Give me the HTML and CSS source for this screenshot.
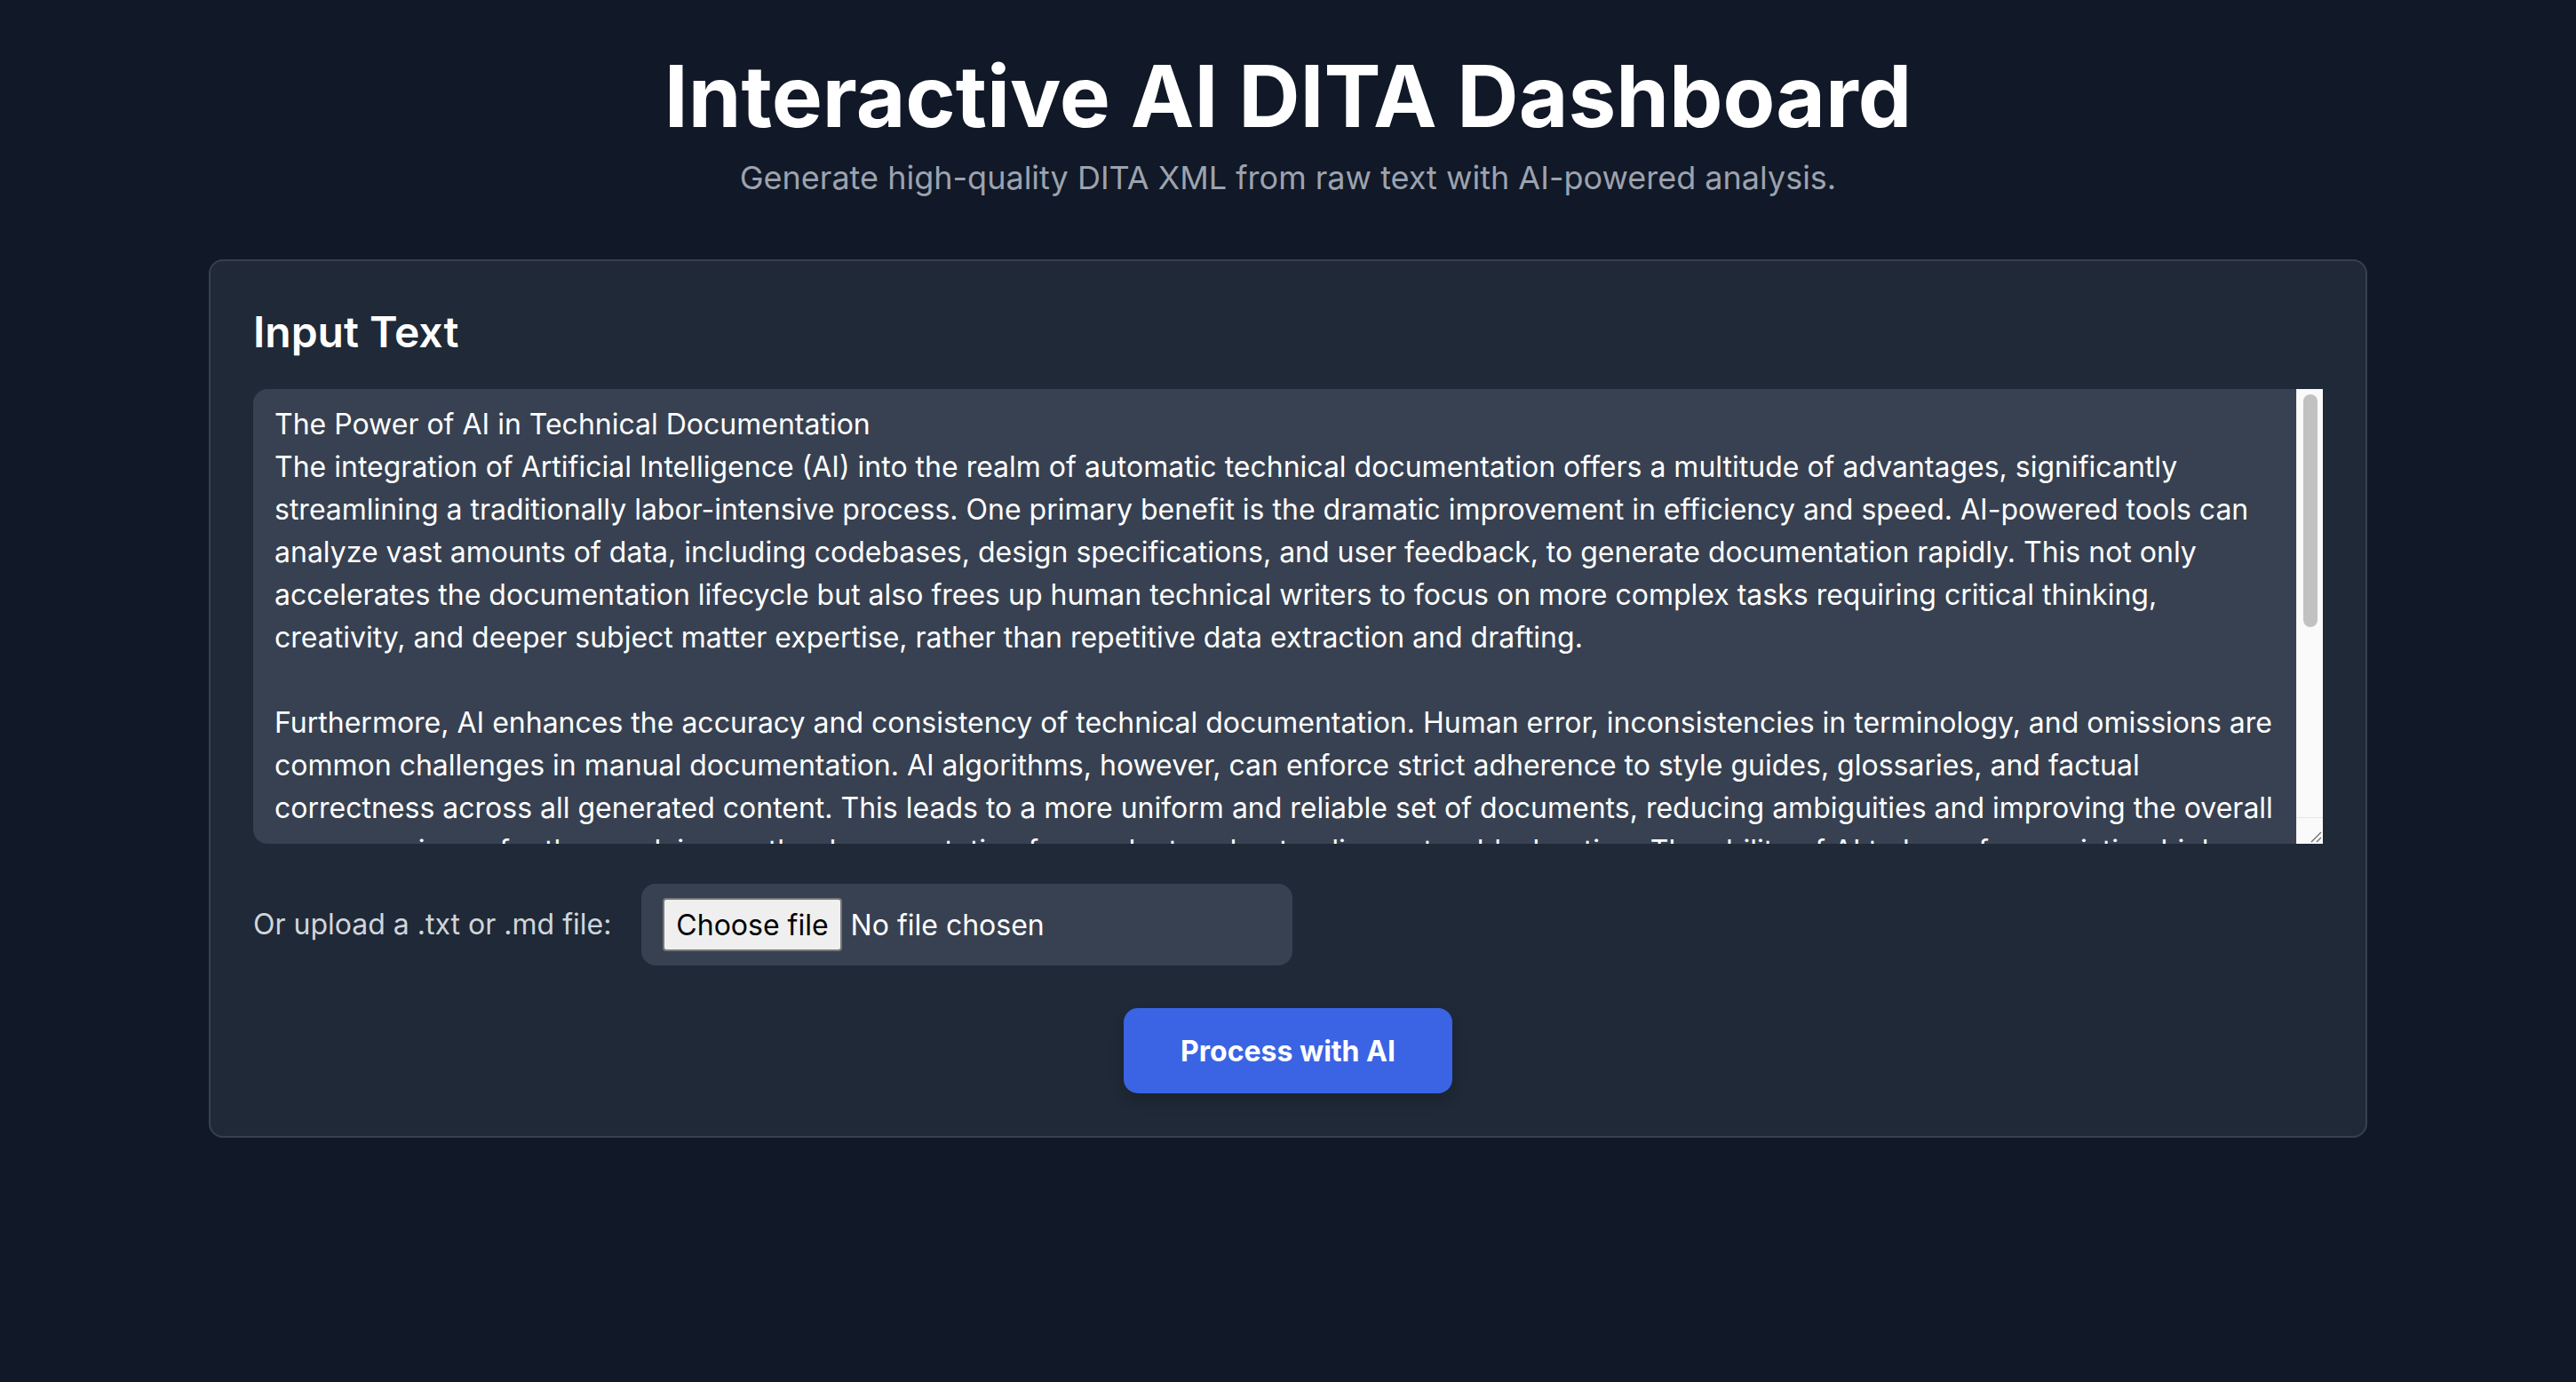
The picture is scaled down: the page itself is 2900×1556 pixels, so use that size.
FILE: index.html
```html
<!DOCTYPE html>
<html lang="en">
<head>
<meta charset="utf-8">
<title>Interactive AI DITA Dashboard</title>
<link rel="stylesheet" href="styles.css">
</head>
<body>
<div class="page">
  <header class="header">
    <h1 class="title">Interactive AI DITA Dashboard</h1>
    <p class="subtitle">Generate high-quality DITA XML from raw text with AI-powered analysis.</p>
  </header>
  <main class="card">
    <h2 class="card-title">Input Text</h2>
    <div class="text-frame">
      <textarea class="input-text" spellcheck="false">The Power of AI in Technical Documentation
The integration of Artificial Intelligence (AI) into the realm of automatic technical documentation offers a multitude of advantages, significantly streamlining a traditionally labor-intensive process. One primary benefit is the dramatic improvement in efficiency and speed. AI-powered tools can analyze vast amounts of data, including codebases, design specifications, and user feedback, to generate documentation rapidly. This not only accelerates the documentation lifecycle but also frees up human technical writers to focus on more complex tasks requiring critical thinking, creativity, and deeper subject matter expertise, rather than repetitive data extraction and drafting.

Furthermore, AI enhances the accuracy and consistency of technical documentation. Human error, inconsistencies in terminology, and omissions are common challenges in manual documentation. AI algorithms, however, can enforce strict adherence to style guides, glossaries, and factual correctness across all generated content. This leads to a more uniform and reliable set of documents, reducing ambiguities and improving the overall user experience for those relying on the documentation for product understanding or troubleshooting. The ability of AI to learn from existing high-quality documentation also means that it can continuously refine its output, adapting to evolving standards and terminology over time.

Finally, AI-driven documentation scales effortlessly. As products grow in complexity and release cycles shorten, keeping documentation current becomes increasingly difficult. AI systems can monitor changes in source code and specifications, automatically flagging outdated sections and proposing updates. This ensures that documentation remains synchronized with the product, reducing the risk of users encountering stale or misleading information, and allowing organizations to deliver consistent, high-quality content across multiple formats, languages, and channels.</textarea>
      <div class="scrollbar" aria-hidden="true">
        <div class="scroll-thumb"></div>
        <div class="scroll-corner">
          <svg class="resizer" width="14" height="14" viewBox="0 0 14 14">
            <line x1="13" y1="2" x2="2" y2="13" stroke="#6b6b6b" stroke-width="1.2"/>
            <line x1="13" y1="8" x2="8" y2="13" stroke="#6b6b6b" stroke-width="1.2"/>
          </svg>
        </div>
      </div>
    </div>
    <div class="upload-row">
      <span class="upload-label">Or upload a .txt or .md file:</span>
      <div class="file-box">
        <span class="file-button">Choose file</span>
        <span class="file-status">No file chosen</span>
      </div>
    </div>
    <div class="actions">
      <button class="process-button" type="button">Process with AI</button>
    </div>
  </main>
</div>
</body>
</html>
```
FILE: styles.css
```css
html, body {
  margin: 0;
  padding: 0;
}

body {
  background: #111827;
  font-family: Inter, "Noto Sans", "Liberation Sans", sans-serif;
  color: #ffffff;
  min-height: 1556px;
}

.page {
  padding-top: 60px;
}

.header {
  text-align: center;
}

.title {
  margin: 0;
  font-size: 96px;
  line-height: 96px;
  font-weight: 700;
  color: #ffffff;
}

.subtitle {
  margin: 16px 0 0;
  font-size: 36px;
  line-height: 56px;
  color: #9ca3af;
}

.card {
  box-sizing: border-box;
  width: 2430px;
  margin: 64px auto 0;
  background: #1f2937;
  border: 2px solid #374151;
  border-radius: 16px;
  padding: 48px;
}

.card-title {
  margin: 0 0 32px;
  font-size: 48px;
  line-height: 64px;
  font-weight: 600;
  color: #ffffff;
}

.text-frame {
  display: flex;
  height: 512px;
}

.input-text {
  flex: 1;
  display: block;
  box-sizing: border-box;
  height: 100%;
  margin: 0;
  padding: 16px 24px;
  border: none;
  border-radius: 16px 0 0 16px;
  background: #374151;
  color: #ffffff;
  font-family: Inter, "Noto Sans", "Liberation Sans", sans-serif;
  font-size: 32px;
  line-height: 48px;
  resize: none;
  outline: none;
  overflow: hidden;
}

.scrollbar {
  box-sizing: border-box;
  width: 30px;
  display: flex;
  flex-direction: column;
  background: #fafafa;
  border-left: 1px solid #ececec;
}

.scroll-thumb {
  width: 16px;
  height: 262px;
  margin: 6px 0 0 7px;
  border-radius: 8px;
  background: #c1c1c1;
}

.scroll-corner {
  margin-top: auto;
  height: 30px;
  box-sizing: border-box;
  border-top: 1px solid #e4e4e4;
  display: flex;
  align-items: flex-end;
  justify-content: flex-end;
}

.resizer {
  display: block;
  margin: 0 1px 1px 0;
}

.upload-row {
  display: flex;
  align-items: center;
  gap: 34px;
  margin-top: 45px;
}

.upload-label {
  font-size: 32px;
  line-height: 48px;
  color: #d1d5db;
}

.file-box {
  box-sizing: border-box;
  width: 733px;
  display: flex;
  align-items: center;
  gap: 10px;
  padding: 16px 24px;
  background: #374151;
  border-radius: 16px;
}

.file-button {
  box-sizing: border-box;
  height: 60px;
  display: flex;
  align-items: center;
  padding: 0 13px;
  background: #efefef;
  border: 2px solid #767676;
  border-radius: 4px;
  color: #000000;
  font-size: 32px;
}

.file-status {
  font-size: 32px;
  color: #ffffff;
}

.actions {
  display: flex;
  justify-content: center;
  margin-top: 48px;
}

.process-button {
  height: 96px;
  padding: 0 64px;
  border: none;
  border-radius: 16px;
  background: #3a64e4;
  color: #ffffff;
  font-family: Inter, "Noto Sans", "Liberation Sans", sans-serif;
  font-size: 32px;
  font-weight: 700;
  box-shadow: 0 8px 16px rgba(0, 0, 0, 0.15);
  cursor: pointer;
}
```
